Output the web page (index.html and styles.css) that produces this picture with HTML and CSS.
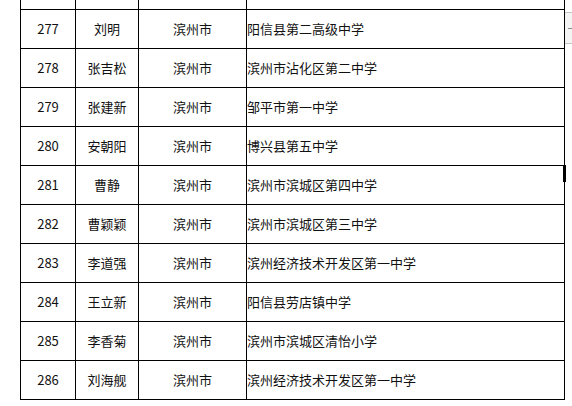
FILE: index.html
```html
<!DOCTYPE html>
<html lang="zh">
<head>
<meta charset="utf-8">
<title>名单</title>
<link rel="stylesheet" href="styles.css">
</head>
<body>
<table class="list">
  <colgroup>
    <col class="c-no"><col class="c-name"><col class="c-city"><col class="c-school">
  </colgroup>
  <tr class="stub"><td></td><td></td><td></td><td></td></tr>
  <tr><td class="ctr">277</td><td class="ctr">刘明</td><td class="ctr">滨州市</td><td>阳信县第二高级中学</td></tr>
  <tr><td class="ctr">278</td><td class="ctr">张吉松</td><td class="ctr">滨州市</td><td>滨州市沾化区第二中学</td></tr>
  <tr><td class="ctr">279</td><td class="ctr">张建新</td><td class="ctr">滨州市</td><td>邹平市第一中学</td></tr>
  <tr><td class="ctr">280</td><td class="ctr">安朝阳</td><td class="ctr">滨州市</td><td>博兴县第五中学</td></tr>
  <tr><td class="ctr">281</td><td class="ctr">曹静</td><td class="ctr">滨州市</td><td>滨州市滨城区第四中学</td></tr>
  <tr><td class="ctr">282</td><td class="ctr">曹颖颖</td><td class="ctr">滨州市</td><td>滨州市滨城区第三中学</td></tr>
  <tr><td class="ctr">283</td><td class="ctr">李道强</td><td class="ctr">滨州市</td><td>滨州经济技术开发区第一中学</td></tr>
  <tr><td class="ctr">284</td><td class="ctr">王立新</td><td class="ctr">滨州市</td><td>阳信县劳店镇中学</td></tr>
  <tr><td class="ctr">285</td><td class="ctr">李香菊</td><td class="ctr">滨州市</td><td>滨州市滨城区清怡小学</td></tr>
  <tr><td class="ctr">286</td><td class="ctr">刘海舰</td><td class="ctr">滨州市</td><td>滨州经济技术开发区第一中学</td></tr>
</table>
<div class="side-tab"><span class="dash"></span></div>
<div class="cursor-mark"></div>
</body>
</html>
```
FILE: styles.css
```css
html, body {
  margin: 0;
  padding: 0;
  background: #fff;
}
body {
  position: relative;
  width: 572px;
  height: 406px;
  overflow: hidden;
  font-family: "Noto Sans CJK SC", "Noto Sans", sans-serif;
  font-size: 13px;
  color: #111;
}
.list {
  margin-left: 20px;
  border-collapse: collapse;
  table-layout: fixed;
  width: 544px;
  border: 1px solid #000;
}
.c-no { width: 55px; }
.c-name { width: 63px; }
.c-city { width: 108px; }
.c-school { width: 318px; }
.list td {
  border: 1px solid #000;
  height: 38px;
  padding: 0;
  white-space: nowrap;
  vertical-align: middle;
  line-height: 16px;
}
.list td.ctr { text-align: center; }
.list .stub td {
  height: 9px;
  border-top: hidden;
}
.side-tab {
  position: absolute;
  left: 565px;
  top: 12px;
  width: 7px;
  height: 30px;
  background: #f4f4f4;
  border-top: 1px solid #c6c6c6;
  border-bottom: 1px solid #c6c6c6;
}
.side-tab .dash {
  position: absolute;
  left: 3px;
  top: 15px;
  width: 4px;
  height: 1px;
  background: #8a8a8a;
}
.cursor-mark {
  position: absolute;
  left: 563px;
  top: 165px;
  width: 3px;
  height: 17px;
  background: #000;
}
```
